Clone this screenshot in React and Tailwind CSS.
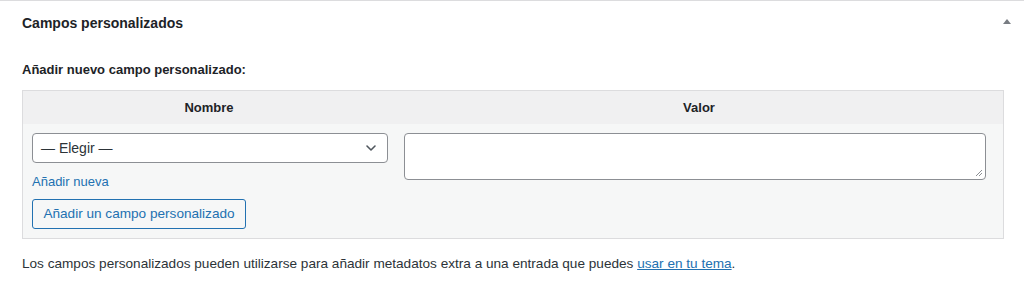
import React from "react";

export default function App() {
  return (
    <div className="w-[1024px] h-[295px] bg-white border-t border-[#dcdcde] text-[#1d2327]" style={{ fontFamily: '"Liberation Sans", Arial, sans-serif' }}>
      <div className="flex items-center justify-between h-[44px] pl-[22px] pr-[12px]">
        <h2 className="text-[14px] font-semibold m-0">Campos personalizados</h2>
        <svg width="10" height="10" viewBox="0 0 10 10" className="mb-[2px]">
          <path d="M5 2 L9 7 L1 7 Z" fill="#787c82" />
        </svg>
      </div>
      <div className="px-[22px]">
        <p className="text-[13px] font-semibold mt-[15px] mb-[10px] leading-[20px]">Añadir nuevo campo personalizado:</p>
        <div className="w-[982px] border border-[#dcdcde] bg-[#f6f7f7]">
          <div className="grid grid-cols-[372px_1fr] bg-[#f0f0f1] h-[33px] items-center text-[13px] font-semibold">
            <div className="text-center">Nombre</div>
            <div className="text-center">Valor</div>
          </div>
          <div className="grid grid-cols-[372px_1fr] pt-[9px] pb-[9px]">
            <div className="pl-[9px] pr-[6px] flex flex-col items-start">
              <div className="w-[356px] h-[30px] bg-white border border-[#8c8f94] rounded-[4px] flex items-center justify-between pl-[8px] pr-[8px] text-[14px] text-[#2c3338]">
                <span>— Elegir —</span>
                <svg width="16" height="16" viewBox="0 0 16 16">
                  <path d="M4 6 L8 10 L12 6" stroke="#50575e" strokeWidth="1.6" fill="none" strokeLinecap="round" strokeLinejoin="round" />
                </svg>
              </div>
              <a href="#" className="mt-[9px] text-[13px] text-[#2271b1] leading-[20px] no-underline">Añadir nueva</a>
              <button className="mt-[7px] h-[30px] w-[214px] border border-[#2271b1] rounded-[3px] text-[#2271b1] bg-[#f6f7f7] text-[13.6px] leading-none">
                Añadir un campo personalizado
              </button>
            </div>
            <div className="pl-[9px] pr-[17px]">
              <div className="relative h-[47px] bg-white border border-[#8c8f94] rounded-[4px]">
                <svg width="8" height="8" viewBox="0 0 8 8" className="absolute right-[2px] bottom-[2px]">
                  <path d="M7 1 L1 7 M7 4 L4 7" stroke="#8c8f94" strokeWidth="1" />
                </svg>
              </div>
            </div>
          </div>
        </div>
        <p className="mt-[15px] text-[13.6px] leading-[20px] text-[#2c3338]">
          Los campos personalizados pueden utilizarse para añadir metadatos extra a una entrada que puedes{" "}
          <a href="#" className="text-[#2271b1] underline">usar en tu tema</a>.
        </p>
      </div>
    </div>
  );
}
